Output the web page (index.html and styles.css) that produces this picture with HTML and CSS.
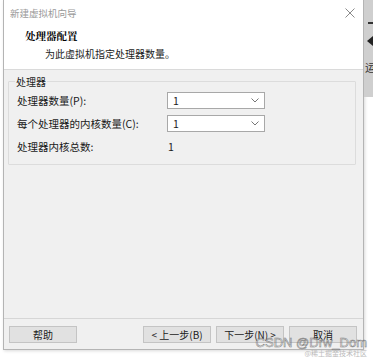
FILE: index.html
```html
<!DOCTYPE html>
<html lang="zh">
<head>
    <meta charset="UTF-8">
    <title>新建虚拟机向导</title>
    <link rel="stylesheet" href="styles.css">
</head>
<body>

<div class="page">
    <div class="window">
        <div class="titlebar">
            <span class="title">新建虚拟机向导</span>
            <svg class="close" width="10" height="10" viewBox="0 0 10 10">
                <path d="M0.5 0.5 L9.5 9.5 M9.5 0.5 L0.5 9.5" stroke="#8a8a8a" stroke-width="1" fill="none"/>
            </svg>
        </div>

        <div class="header">
            <div class="heading">处理器配置</div>
            <div class="subheading">为此虚拟机指定处理器数量。</div>
        </div>

        <div class="content">
            <fieldset class="group">
                <legend>处理器</legend>
                <div class="row">
                    <span class="label">处理器数量(P):</span>
                    <div class="combo">
                        <span>1</span>
                        <svg width="8" height="5" viewBox="0 0 8 5"><path d="M0.5 0.5 L4 4 L7.5 0.5" stroke="#777" fill="none"/></svg>
                    </div>
                </div>
                <div class="row">
                    <span class="label">每个处理器的内核数量(C):</span>
                    <div class="combo">
                        <span>1</span>
                        <svg width="8" height="5" viewBox="0 0 8 5"><path d="M0.5 0.5 L4 4 L7.5 0.5" stroke="#777" fill="none"/></svg>
                    </div>
                </div>
                <div class="row total">
                    <span class="label">处理器内核总数:</span>
                    <span class="value">1</span>
                </div>
            </fieldset>
        </div>

        <div class="footer">
            <button class="btn">帮助</button>
            <div class="nav-buttons">
                <button class="btn">&lt; 上一步(B)</button>
                <button class="btn">下一步(N) &gt;</button>
                <button class="btn">取消</button>
            </div>
        </div>

        <div class="watermark">
            <div class="wm-main">CSDN @Drw_Dom</div>
            <div class="wm-sub">@稀土掘金技术社区</div>
        </div>
    </div>

    <div class="side">
        <span class="side-dash"></span>
        <span class="side-arrow"></span>
        <span class="side-char">运</span>
    </div>
</div>

</body>
</html>
```

FILE: styles.css
```css
body {
    margin: 0;
    padding: 0;
    background-color: #ffffff;
    font-family: "Noto Sans CJK SC", "Microsoft YaHei", sans-serif;
    font-size: 10.5px;
    color: #1a1a1a;
}

.page {
    display: flex;
    align-items: flex-start;
    padding-left: 3px;
    height: 357px;
    overflow: hidden;
}

.window {
    position: relative;
    width: 360px;
    height: 349px;
    border: 1px solid #b4b4b4;
    border-top: none;
    background-color: #f0f0f0;
    display: flex;
    flex-direction: column;
    box-shadow: 1px 1px 3px rgba(0, 0, 0, 0.15);
}

.titlebar {
    background-color: #ffffff;
    height: 25px;
    display: flex;
    align-items: center;
    justify-content: space-between;
    padding: 0 8px 0 6px;
}

.title {
    color: #9a9a9a;
    font-size: 9.5px;
}

.header {
    background-color: #ffffff;
    height: 44px;
    border-bottom: 1px solid #dadada;
    padding-left: 21px;
}

.heading {
    font-family: "Noto Serif CJK SC", "Noto Sans CJK SC", serif;
    font-weight: bold;
    font-size: 10.5px;
    color: #000;
    margin-top: 3px;
}

.subheading {
    margin-top: 3px;
    margin-left: 20px;
    font-size: 10px;
    color: #222;
}

.content {
    flex: 1;
    padding: 4px 7px 0 4px;
}

.group {
    margin: 0;
    border: 1px solid #dcdcdc;
    border-radius: 1px;
    padding: 0 0 6px 8px;
}

.group legend {
    padding: 0 1px;
    margin-left: -2px;
    font-size: 10px;
    color: #222;
}

.row {
    display: flex;
    align-items: center;
    height: 23px;
}

.label {
    width: 150px;
}

.combo {
    height: 15px;
    width: 86px;
    background-color: #ffffff;
    border: 1px solid #a8a8a8;
    display: flex;
    align-items: center;
    justify-content: space-between;
    padding: 0 5px;
}

.value {
    padding-left: 1px;
}

.footer {
    border-top: 1px solid #d6d6d6;
    height: 30px;
    display: flex;
    align-items: center;
    justify-content: space-between;
    padding: 0 6px 0 5px;
}

.nav-buttons {
    display: flex;
    gap: 5px;
}

.btn {
    width: 68px;
    height: 17px;
    padding: 0;
    margin: 0;
    background-color: #e1e1e1;
    border: 1px solid #c4c4c4;
    font-family: "Noto Sans CJK SC", sans-serif;
    font-size: 10px;
    color: #222;
}

.watermark {
    position: absolute;
    right: -4px;
    bottom: -8px;
    text-align: right;
    line-height: 1;
}

.wm-main {
    font-family: "Liberation Sans", sans-serif;
    font-size: 13px;
    color: transparent;
    -webkit-text-stroke: 0.5px #7a7a7a;
}

.wm-sub {
    font-size: 7px;
    color: #bbbbbb;
    margin-top: 1px;
}

.side {
    width: 9px;
    height: 97px;
    background-color: #cfcfcf;
    position: relative;
    overflow: hidden;
}

.side-dash {
    position: absolute;
    left: 4px;
    top: 22px;
    width: 5px;
    height: 2px;
    background-color: #333;
}

.side-arrow {
    position: absolute;
    left: 3px;
    top: 36px;
    border-top: 5px solid transparent;
    border-bottom: 5px solid transparent;
    border-right: 6px solid #222;
}

.side-char {
    position: absolute;
    left: 1px;
    top: 59px;
    font-size: 11px;
    color: #333;
}
```
